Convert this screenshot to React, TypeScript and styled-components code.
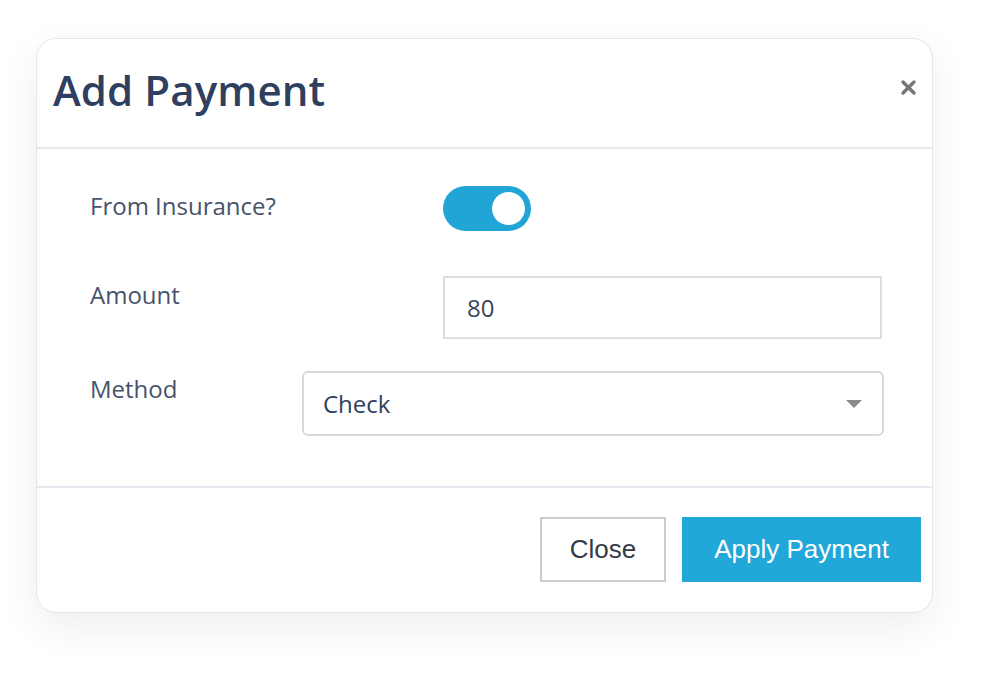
import React, { useState } from 'react';
import styled, { createGlobalStyle } from 'styled-components';

const GlobalStyle = createGlobalStyle`
  html, body {
    margin: 0;
    padding: 0;
    background: #fff;
  }
  body {
    font-family: 'Open Sans', 'Noto Sans', sans-serif;
  }
`;

const Page = styled.div`
  width: 1000px;
  height: 683px;
  padding: 38px 0 0 36px;
  box-sizing: border-box;
`;

const Modal = styled.div`
  width: 897px;
  height: 575px;
  box-sizing: border-box;
  background: #fff;
  border: 1px solid #e6e6e6;
  border-radius: 20px;
  box-shadow: 0 14px 40px rgba(0, 0, 0, 0.07);
  display: flex;
  flex-direction: column;
  overflow: hidden;
`;

const Header = styled.div`
  height: 110px;
  box-sizing: border-box;
  display: flex;
  align-items: center;
  justify-content: space-between;
  padding: 0 12px 8px 16px;
  border-bottom: 2px solid #e4e8ef;
`;

const Title = styled.h1`
  margin: 0;
  font-family: 'Open Sans', sans-serif;
  font-size: 42px;
  font-weight: 600;
  color: #2f3f5f;
  letter-spacing: 0.1px;
`;

const CloseX = styled.button`
  border: none;
  background: none;
  padding: 0;
  margin-bottom: 4px;
  width: 24px;
  height: 24px;
  display: flex;
  align-items: center;
  justify-content: center;
  cursor: pointer;
`;

const Body = styled.div`
  flex: 1;
  padding: 37px 0 0 53px;
  display: flex;
  flex-direction: column;
  border-bottom: 2px solid #e4e8ef;
`;

const Row = styled.div<{ $h: number }>`
  display: flex;
  align-items: flex-start;
  height: ${(p) => p.$h}px;
`;

const Label = styled.div<{ $w: number; $top: number }>`
  width: ${(p) => p.$w}px;
  padding-top: ${(p) => p.$top}px;
  font-size: 24px;
  line-height: 32px;
  color: #46536a;
  flex-shrink: 0;
`;

const Toggle = styled.button<{ $on: boolean }>`
  width: 88px;
  height: 45px;
  border-radius: 23px;
  border: none;
  background: ${(p) => (p.$on ? '#21a5d6' : '#c9ced6')};
  display: flex;
  align-items: center;
  justify-content: ${(p) => (p.$on ? 'flex-end' : 'flex-start')};
  padding: 0 6px;
  box-sizing: border-box;
  cursor: pointer;
`;

const Knob = styled.span`
  width: 33px;
  height: 33px;
  border-radius: 50%;
  background: #fff;
`;

const TextInput = styled.input`
  width: 439px;
  height: 63px;
  box-sizing: border-box;
  border: 2px solid #dedede;
  border-radius: 0;
  padding: 0 22px;
  font-family: 'Open Sans', sans-serif;
  font-size: 24px;
  color: #3a4558;
  outline: none;
`;

const SelectBox = styled.div`
  width: 582px;
  height: 65px;
  box-sizing: border-box;
  border: 2px solid #d9d9d9;
  border-radius: 6px;
  display: flex;
  align-items: center;
  justify-content: space-between;
  padding: 0 20px 0 19px;
  font-size: 24px;
  color: #2f3f5f;
`;

const Caret = styled.span`
  width: 0;
  height: 0;
  border-left: 8px solid transparent;
  border-right: 8px solid transparent;
  border-top: 8px solid #8a8a8a;
`;

const Footer = styled.div`
  height: 124px;
  box-sizing: border-box;
  display: flex;
  justify-content: flex-end;
  align-items: flex-start;
  gap: 16px;
  padding: 29px 11px 0 0;
`;

const Button = styled.button<{ $primary?: boolean }>`
  height: 65px;
  padding: 0 ${(p) => (p.$primary ? 30 : 28)}px;
  box-sizing: border-box;
  font-family: 'Liberation Sans', Arial, sans-serif;
  font-size: 26px;
  cursor: pointer;
  border: 2px solid ${(p) => (p.$primary ? '#21a7d8' : '#cccccc')};
  background: ${(p) => (p.$primary ? '#21a7d8' : '#fff')};
  color: ${(p) => (p.$primary ? '#fff' : '#333a48')};
`;

export default function App() {
  const [insurance, setInsurance] = useState(true);
  const [amount, setAmount] = useState('80');

  return (
    <Page>
      <GlobalStyle />
      <Modal>
        <Header>
          <Title>Add Payment</Title>
          <CloseX aria-label="close">
            <svg width="17" height="17" viewBox="0 0 17 17">
              <path d="M3 3 L14 14 M14 3 L3 14" stroke="#777" strokeWidth="3.4" strokeLinecap="round" />
            </svg>
          </CloseX>
        </Header>
        <Body>
          <Row $h={90}>
            <Label $w={353} $top={4}>From Insurance?</Label>
            <Toggle $on={insurance} onClick={() => setInsurance(!insurance)}>
              <Knob />
            </Toggle>
          </Row>
          <Row $h={95}>
            <Label $w={353} $top={3}>Amount</Label>
            <TextInput value={amount} onChange={(e) => setAmount(e.target.value)} />
          </Row>
          <Row $h={100}>
            <Label $w={212} $top={2}>Method</Label>
            <SelectBox>
              <span>Check</span>
              <Caret />
            </SelectBox>
          </Row>
        </Body>
        <Footer>
          <Button>Close</Button>
          <Button $primary>Apply Payment</Button>
        </Footer>
      </Modal>
    </Page>
  );
}
